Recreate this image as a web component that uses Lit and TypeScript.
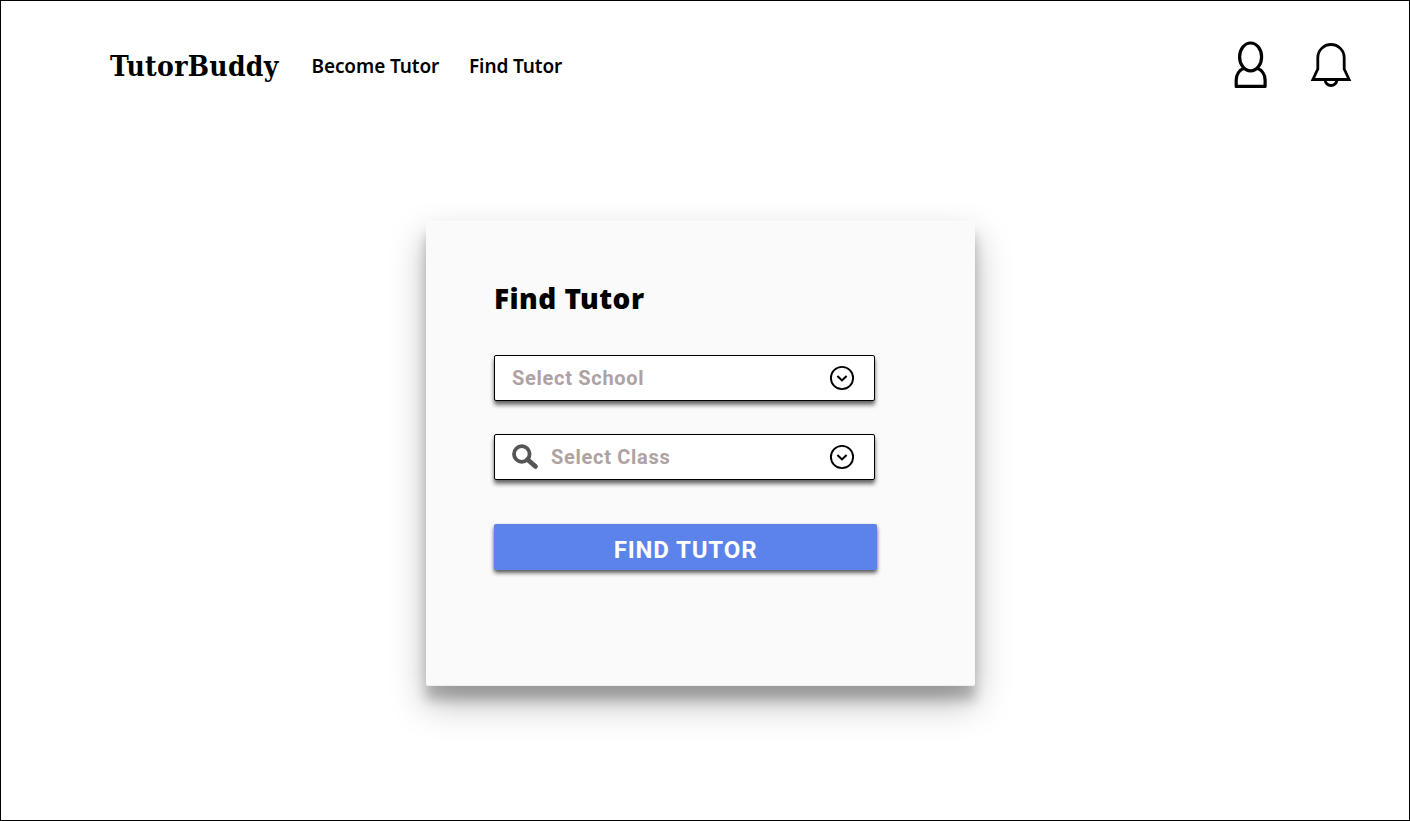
import { LitElement, html, css, svg } from "lit";
import { customElement } from "lit/decorators.js";

const chevron = svg`<circle cx="13" cy="13" r="11.1" stroke-width="1.9"/><path d="M8.4 10.9 13 15.4l4.6-4.5" stroke-width="2.1"/>`;

@customElement("app-root")
export class AppRoot extends LitElement {
  static styles = css`
    :host { display: block; }
    * { box-sizing: border-box; }
    .page { height: 821px; border: 1px solid #000; background: #fff; color: #000; font-family: "Noto Sans", sans-serif; overflow: hidden; }
    .header { height: 130px; display: flex; align-items: center; padding: 0 57px 0 109px; }
    .logo { width: 201.5px; padding-top: 1px; font: 700 28px/40px "Roboto Slab", "DejaVu Serif Condensed", "DejaVu Serif", serif; font-stretch: condensed; letter-spacing: .3px; white-space: nowrap; }
    .nav { display: flex; flex: 1; white-space: nowrap; font-size: 19px; font-weight: 600; line-height: 30px; letter-spacing: -.1px; }
    .nav-link { width: 157.5px; }
    .icons { display: flex; gap: 43px; align-items: center; padding-bottom: 2px; }
    svg { display: block; fill: none; stroke: #000; flex: none; }
    .card { width: 549px; height: 465px; margin: 90px 0 0 425px; padding: 57px 97px 0 68px; background: #fafafa; border-radius: 2px; border: 1px solid #fcfcfc; border-bottom-color: #eee; border-width: 1px 0; box-shadow: 0 17px 36px rgba(0,0,0,.28), 0 14px 12px rgba(0,0,0,.22); }
    .title { margin: 0; height: 76px; font-size: 28px; font-weight: 900; line-height: 38px; letter-spacing: .45px; white-space: nowrap; }
    .field { width: 381px; height: 46px; margin: 0 0 33px; padding: 0 19px 0 17px; display: flex; align-items: center; border: 1px solid #000; border-radius: 2px; background: #fff; box-shadow: 0 4px 4px rgba(0,0,0,.55), 0 1px 3px rgba(0,0,0,.15); }
    .label { flex: 1; color: #aea2a2; font: 700 20px/24px Roboto, sans-serif; letter-spacing: .7px; white-space: nowrap; }
    .search { margin-right: 12px; }
    .button { display: block; width: 383px; height: 46px; margin: 44px 0 0; padding: 5px 0 0; border: 0; border-radius: 2px; background: #5b83ea; color: #fff; font: 700 24px/28px Roboto, sans-serif; letter-spacing: .85px; box-shadow: 0 3px 4px rgba(0,0,0,.6), 0 1px 3px rgba(0,0,0,.15); }
  `;

  private field(label: string, searchable = false) {
    return html`<div class="field">
      ${searchable ? html`<svg class="search" width="27" height="26" viewBox="0 0 27 26" style="stroke:#555"><circle cx="9.8" cy="10" r="7.8" stroke-width="3.8"/><path d="m15.5 15.5 8 7" stroke-width="4.8" stroke-linecap="round"/></svg>` : ""}
      <span class="label">${label}</span>
      <svg width="26" height="26" viewBox="0 0 26 26">${chevron}</svg>
    </div>`;
  }

  render() {
    return html`<div class="page">
      <header class="header">
        <div class="logo">TutorBuddy</div>
        <nav class="nav"><span class="nav-link">Become Tutor</span><span class="nav-link">Find Tutor</span></nav>
        <div class="icons">
          <svg width="33" height="48" viewBox="1 0 33 48" stroke-width="3.2"><ellipse cx="17.6" cy="15.9" rx="11" ry="13.9"/><path d="M11.8 27.1C6 29 3.2 34 3.2 39v6.4h28.9V39c0-5-2.8-10-8.6-11.9" stroke-linejoin="round"/></svg>
          <svg width="42" height="48" viewBox="0 0 42 48" stroke-width="2.8"><path d="M7.8 28V16.7a13.2 13.2 0 0 1 26.4 0V28l4.9 10.5H2.9Z"/><path d="M15.2 39a5.8 5.5 0 0 0 11.6 0"/></svg>
        </div>
      </header>
      <main class="card">
        <h1 class="title">Find Tutor</h1>
        ${this.field("Select School")}
        ${this.field("Select Class", true)}
        <button class="button">FIND TUTOR</button>
      </main>
    </div>`;
  }
}
